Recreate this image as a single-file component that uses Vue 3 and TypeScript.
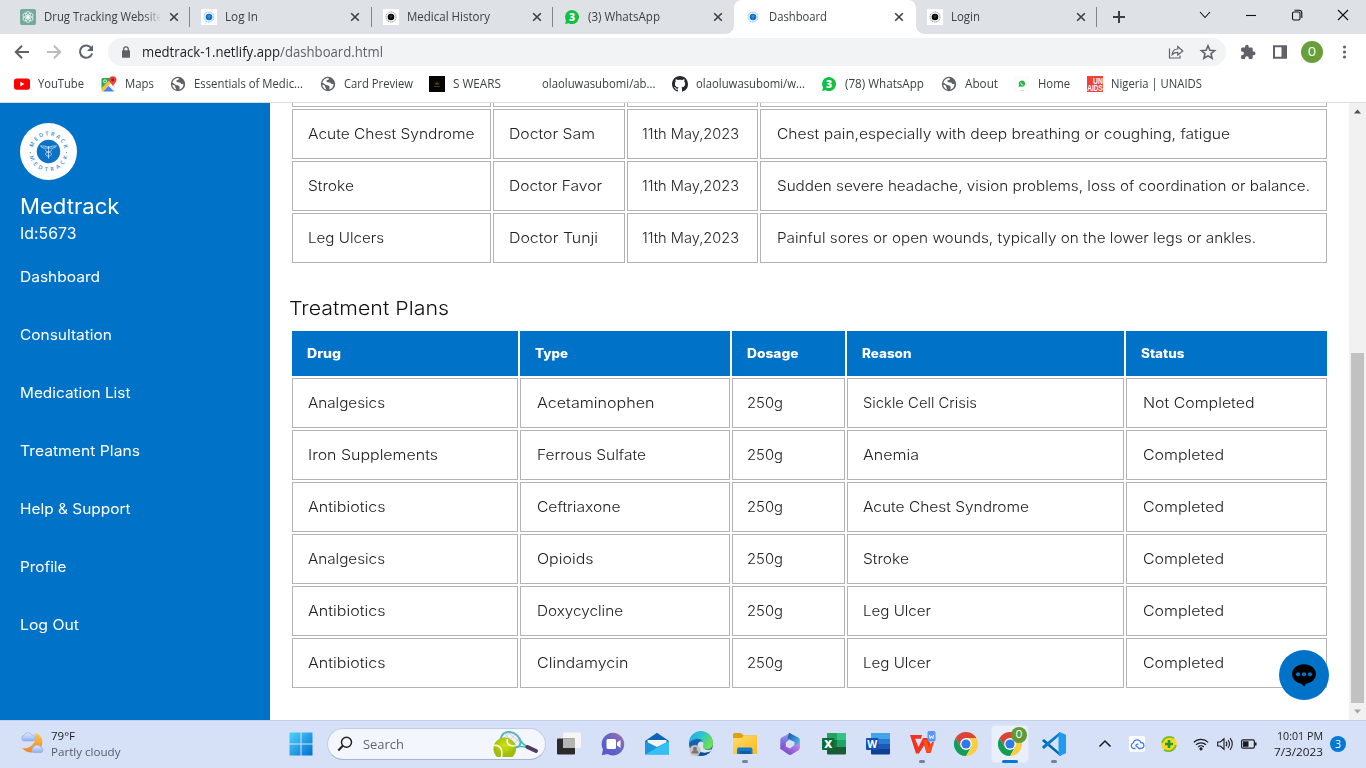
<script setup lang="ts">
import type { Directive } from 'vue'

interface Tab { title: string; w: number; icon: string; active?: boolean }
interface Bookmark { label: string; w: number; icon: string }
type Cell = [text: string, width: number]

// Stretches a single line of text horizontally to the given advance width.
const vFit: Directive<HTMLElement, number> = {
  mounted(el, { value }) {
    const natural = el.getBoundingClientRect().width
    if (!natural || !value) return
    el.style.transformOrigin = '0 50%'
    el.style.transform = `scaleX(${value / natural})`
    el.style.marginRight = `${value - natural}px`
  },
}

const tabs: Tab[] = [
  { title: 'Drug Tracking Website', w: 119, icon: 'gpt' },
  { title: 'Log In', w: 33, icon: 'medblue' },
  { title: 'Medical History', w: 83, icon: 'medblack' },
  { title: '(3) WhatsApp', w: 72, icon: 'wa' },
  { title: 'Dashboard', w: 58, icon: 'medblue', active: true },
  { title: 'Login', w: 29, icon: 'medblack' },
]

const bookmarks: Bookmark[] = [
  { label: 'YouTube', w: 46, icon: 'yt' },
  { label: 'Maps', w: 29, icon: 'maps' },
  { label: 'Essentials of Medic...', w: 109, icon: 'globe' },
  { label: 'Card Preview', w: 69, icon: 'globe' },
  { label: 'S WEARS', w: 48, icon: 'wears' },
  { label: 'olaoluwasubomi/ab...', w: 113.5, icon: 'blank' },
  { label: 'olaoluwasubomi/w...', w: 109, icon: 'github' },
  { label: '(78) WhatsApp', w: 79, icon: 'wa' },
  { label: 'About', w: 33, icon: 'globe' },
  { label: 'Home', w: 32, icon: 'walite' },
  { label: 'Nigeria | UNAIDS', w: 91, icon: 'unaids' },
]

const nav: Cell[] = [
  ['Dashboard', 80], ['Consultation', 92], ['Medication List', 110.5], ['Treatment Plans', 120],
  ['Help & Support', 110.5], ['Profile', 46.5], ['Log Out', 59],
]

const history: Cell[][] = [
  [['Acute Chest Syndrome', 166.5], ['Doctor Sam', 86], ['11th May,2023', 97], ['Chest pain,especially with deep breathing or coughing, fatigue', 453]],
  [['Stroke', 46], ['Doctor Favor', 93], ['11th May,2023', 97], ['Sudden severe headache, vision problems, loss of coordination or balance.', 533]],
  [['Leg Ulcers', 76], ['Doctor Tunji', 89], ['11th May,2023', 97], ['Painful sores or open wounds, typically on the lower legs or ankles.', 479]],
]

const planHeads: Cell[] = [['Drug', 34], ['Type', 33], ['Dosage', 51.5], ['Reason', 49.5], ['Status', 43.5]]
const dose: Cell = ['250g', 36]
const done: Cell = ['Completed', 81]
const plans: Cell[][] = [
  [['Analgesics', 77], ['Acetaminophen', 117.5], dose, ['Sickle Cell Crisis', 114], ['Not Completed', 111.5]],
  [['Iron Supplements', 130], ['Ferrous Sulfate', 109], dose, ['Anemia', 56], done],
  [['Antibiotics', 77.5], ['Ceftriaxone', 83.5], dose, ['Acute Chest Syndrome', 166], done],
  [['Analgesics', 77], ['Opioids', 56.5], dose, ['Stroke', 46], done],
  [['Antibiotics', 77.5], ['Doxycycline', 86], dose, ['Leg Ulcer', 68], done],
  [['Antibiotics', 77.5], ['Clindamycin', 91.5], dose, ['Leg Ulcer', 68], done],
]

const apps = ['view', 'chat', 'mail', 'edge', 'files', 'm365', 'excel', 'word', 'wps', 'chrome', 'chrome2', 'code']
const running = ['files', 'wps', 'code']
</script>

<template>
  <div class="screen">
    <svg class="defs" width="0" height="0">
      <defs>
        <symbol id="gpt" viewBox="0 0 16 16"><rect width="16" height="16" rx="2" fill="#74aa9c" /><g fill="none" stroke="#fff" stroke-width=".7"><ellipse cx="8" cy="5.4" rx="2.3" ry="2.9" /><ellipse cx="8" cy="5.4" rx="2.3" ry="2.9" transform="rotate(60 8 8)" /><ellipse cx="8" cy="5.4" rx="2.3" ry="2.9" transform="rotate(120 8 8)" /><ellipse cx="8" cy="5.4" rx="2.3" ry="2.9" transform="rotate(180 8 8)" /><ellipse cx="8" cy="5.4" rx="2.3" ry="2.9" transform="rotate(240 8 8)" /><ellipse cx="8" cy="5.4" rx="2.3" ry="2.9" transform="rotate(300 8 8)" /></g></symbol>
        <symbol id="medblue" viewBox="0 0 16 16"><rect width="16" height="16" fill="#fff" /><circle cx="8" cy="8" r="4.9" fill="none" stroke="#9cc6ea" stroke-width="1.1" stroke-dasharray="1.4 .5" /><circle cx="8" cy="8" r="3.3" fill="#0b6fc8" /><path d="M6.3 7h3.4M8 6.6v3" stroke="#7db7e8" stroke-width=".6" /></symbol>
        <symbol id="medblack" viewBox="0 0 16 16"><rect width="16" height="16" fill="#fff" /><circle cx="8" cy="8" r="5" fill="none" stroke="#a5a5a5" stroke-width="1.1" stroke-dasharray="1.4 .5" /><circle cx="8" cy="8" r="3.3" fill="#050505" /><path d="M6.3 7h3.4M8 6.6v3" stroke="#666" stroke-width=".6" /></symbol>
        <symbol id="wa" viewBox="0 0 16 16"><path d="M8 1a7 7 0 1 1-3.3 13.2L1.2 15 2 11.5A7 7 0 0 1 8 1z" fill="#0fc143" /><text x="8" y="11.8" text-anchor="middle" font-family="Open Sans" font-size="10.5" font-weight="800" fill="#fff">3</text></symbol>
        <symbol id="walite" viewBox="0 0 16 16"><rect width="16" height="16" fill="#fcfcfc" /><path d="M8 4.4a3.2 3.2 0 1 1-1.6 6l-1.8.5.5-1.7A3.2 3.2 0 0 1 8 4.4z" fill="#28b446" /><path d="M6.7 6.5c0 1.5 1 2.500 2.500 2.500" stroke="#fff" stroke-width=".9" fill="none" /><path d="M6 14.500h4" stroke="#ddd" stroke-width="1" /></symbol>
        <symbol id="yt" viewBox="0 0 16 16"><rect y="2.400" width="16" height="11.300" rx="2.600" fill="#f00" /><path d="M6.300 5.700v4.700L10.400 8z" fill="#fff" /></symbol>
        <symbol id="maps" viewBox="0 0 16 16"><rect x=".5" y="2" width="13.500" height="13.500" rx="1.500" fill="#e8eaed" /><path d="M.5 3.500A1.500 1.500 0 0 1 2 2h9L.5 12.500z" fill="#34a853" /><path d="M.5 12.500 8.500 4.500l2 2-9 9a1.500 1.500 0 0 1-1-1z" fill="#fbc02d" /><path d="M2 15.500 7.500 10l5.500 5.500z" fill="#4285f4" /><path d="m8.500 9 1-1 4.500 4.500v2z" fill="#fff" /><circle cx="4" cy="5.300" r="1.500" fill="none" stroke="#fff" stroke-width=".8" /><path d="M11.800.2a3.700 3.700 0 0 1 3.700 3.700c0 2.500-2.800 3.300-3.500 6.600-.8-3.300-3.900-4.100-3.900-6.600A3.700 3.700 0 0 1 11.800.2z" fill="#ea4335" /><circle cx="11.800" cy="3.900" r="1.300" fill="#8b1d14" /></symbol>
        <symbol id="globe" viewBox="0 0 16 16"><circle cx="8" cy="8" r="7.200" fill="#5f6368" /><path d="M8.500 2c1 1.300-.2 2.300-1.500 2.300S6.500 6 7.400 6.300c1.200.4 2.800-.3 3.200.8.400 1.200 1.600 1 2.900.8-.1 3-1.800 4.800-4 5.600-.4-1.200.6-2.300-.2-3.300C8.200 9 6 9.300 4.900 8.300 4 7.500 3 7.200 2.300 6.800 3 3.800 5.500 2 8.500 2z" fill="#fff" /><path d="M2.300 8.700c1.400.3 3 .5 3 2.200 0 1 .9 1.300.9 2.700-2.100-.6-3.700-2.500-3.900-4.900z" fill="#fff" /></symbol>
        <symbol id="wears" viewBox="0 0 16 16"><rect width="16" height="16" fill="#050505" /><path d="m5.500 6 1.200 1.300L8 5.300l1.300 2L10.500 6l-.5 2.800H6z" fill="#4a3812" /><path d="M5 10.500h6" stroke="#4a3812" /></symbol>
        <symbol id="blank" viewBox="0 0 16 16" />
        <symbol id="github" viewBox="0 0 16 16"><path fill="#24292f" d="M8 0C3.580 0 0 3.580 0 8c0 3.540 2.290 6.530 5.470 7.590.4.070.55-.17.55-.38 0-.19-.01-.82-.01-1.490-2.010.37-2.530-.49-2.690-.94-.09-.23-.48-.94-.82-1.130-.28-.15-.68-.52-.01-.53.63-.01 1.080.58 1.230.82.720 1.210 1.870.87 2.330.66.070-.52.28-.87.51-1.070-1.780-.2-3.640-.89-3.640-3.950 0-.87.31-1.590.82-2.150-.08-.2-.36-1.020.08-2.120 0 0 .67-.21 2.200.82.640-.18 1.320-.27 2-.27s1.360.09 2 .27c1.530-1.040 2.200-.82 2.200-.82.44 1.100.16 1.920.08 2.120.51.560.82 1.270.82 2.150 0 3.070-1.870 3.750-3.650 3.950.29.25.54.730.54 1.480 0 1.070-.01 1.930-.01 2.200 0 .21.15.46.55.38A8.010 8.010 0 0 0 16 8c0-4.420-3.580-8-8-8z" /></symbol>
        <symbol id="unaids" viewBox="0 0 16 16"><rect width="16" height="16" fill="#ef4136" /><text x="6" y="8.400" font-family="Liberation Sans" font-size="8.600" font-weight="700" fill="#fff" textLength="9.800" lengthAdjust="spacingAndGlyphs">UN</text><text x=".2" y="15.400" font-family="Liberation Sans" font-size="8.800" font-weight="700" fill="#fff" textLength="15.600" lengthAdjust="spacingAndGlyphs">AIDS</text></symbol>
        <linearGradient id="gWin" x1="0" y1="0" x2="1" y2="1"><stop offset="0" stop-color="#50d2fb" /><stop offset="1" stop-color="#0070d0" /></linearGradient>
        <linearGradient id="gChat" x1="0" y1="1" x2="1" y2="0"><stop offset="0" stop-color="#5457cb" /><stop offset=".5" stop-color="#6264c9" /><stop offset="1" stop-color="#a56fa6" /></linearGradient>
        <linearGradient id="gEdge" x1="0" y1="0" x2="1" y2=".5"><stop offset="0" stop-color="#2aa6e8" /><stop offset=".5" stop-color="#2bc4d0" /><stop offset="1" stop-color="#6ee04e" /></linearGradient>
        <linearGradient id="gFold" x1="0" y1="0" x2="1" y2="1"><stop offset="0" stop-color="#ffdc6a" /><stop offset="1" stop-color="#fcb91f" /></linearGradient>
        <linearGradient id="gM1" x1="0" y1="0" x2="0" y2="1"><stop offset="0" stop-color="#8ea0f5" /><stop offset="1" stop-color="#7b3fc4" /></linearGradient>
        <linearGradient id="gM2" x1="0" y1="0" x2="1" y2="1"><stop offset="0" stop-color="#194fae" /><stop offset="1" stop-color="#59cdf5" /></linearGradient>
        <linearGradient id="gM3" x1="0" y1="1" x2="1" y2="0"><stop offset="0" stop-color="#6a3cc0" /><stop offset="1" stop-color="#c88af0" /></linearGradient>
        <linearGradient id="gMoon" x1="0" y1="0" x2="0" y2="1"><stop offset="0" stop-color="#f9c846" /><stop offset="1" stop-color="#f0862d" /></linearGradient>
        <linearGradient id="gCloud" x1="0" y1="0" x2="0" y2="1"><stop offset="0" stop-color="#e3edff" /><stop offset="1" stop-color="#8fb0ee" /></linearGradient>
        <radialGradient id="gBall" cx=".5" cy=".4"><stop offset="0" stop-color="#d0e312" /><stop offset="1" stop-color="#9fbd0a" /></radialGradient>
        <symbol id="chrome" viewBox="0 0 24 24"><path d="M1.600 6 6.800 15 12 12V6h10.400A12 12 0 0 0 1.600 6z" fill="#db4437" /><path d="m12 24 5.200-9L12 12l-5.200 3L1.600 6A12 12 0 0 0 12 24z" fill="#0f9d58" /><path d="M12 24l5.200-9L12 12V6h10.400A12 12 0 0 1 12 24z" fill="#ffcd40" /><circle cx="12" cy="12" r="5.900" fill="#fff" /><circle cx="12" cy="12" r="4.600" fill="#2b7bee" /></symbol>
      </defs>
    </svg>

    <header class="tabstrip">
      <div v-for="(t, i) in tabs" :key="i" class="tab" :class="{ active: t.active, sep: !t.active && i !== 3 }">
        <svg class="ico"><use :href="'#' + t.icon" /></svg>
        <span class="title" :class="{ faded: i === 0 }"><span v-fit="t.w" class="seg">{{ t.title }}</span></span>
        <svg class="close" viewBox="0 0 10 10"><path d="m1.200 1.200 7.600 7.600M8.800 1.200 1.200 8.800" stroke="#3c4043" stroke-width="1.600" /></svg>
      </div>
      <svg class="plus" viewBox="0 0 12 12"><path d="M6 0v12M0 6h12" stroke="#3c4043" stroke-width="2" /></svg>
      <div class="winctl">
        <svg viewBox="0 0 12 12"><path d="m1 3 5 5.500L11 3" /></svg>
        <svg viewBox="0 0 12 12"><path d="M1 6.500h10" /></svg>
        <svg viewBox="0 0 12 12"><rect x="1.500" y="3" width="7.500" height="8" rx="1.500" /><path d="M3.500 1.300H8A2.800 2.800 0 0 1 10.800 4v5" /></svg>
        <svg viewBox="0 0 12 12"><path d="m1 1 10 10M11 1 1 11" /></svg>
      </div>
    </header>

    <div class="toolbar">
      <svg class="tb" viewBox="0 0 16 16"><path d="M15 8H2M8 1.800 1.800 8 8 14.200" fill="none" stroke="#5f6368" stroke-width="2" /></svg>
      <svg class="tb" viewBox="0 0 16 16"><path d="M1 8h13M8 1.800 14.200 8 8 14.200" fill="none" stroke="#babcbe" stroke-width="2" /></svg>
      <svg class="tb" viewBox="0 0 16 16"><path d="M13.400 4.200A6.200 6.200 0 1 0 14.100 9.500" fill="none" stroke="#5f6368" stroke-width="2" /><path d="M15 1v6H9z" fill="#5f6368" /></svg>
      <div class="omni">
        <svg class="lock" viewBox="0 0 10 12"><rect x="1" y="4.300" width="8" height="7.500" rx=".8" fill="#5f6368" /><path d="M2.700 5V3.200a2.300 2.300 0 0 1 4.600 0V5" fill="none" stroke="#5f6368" stroke-width="1.300" /></svg>
        <span v-fit="241" class="seg url"><b>medtrack-1.netlify.app</b>/dashboard.html</span>
        <svg class="share" viewBox="0 0 16 16"><path d="M1.500 4.500v9.500h10.500v-2.500" /><path d="M4.200 10.500c.3-3.500 2.600-5.500 5.600-5.500V2.500l5 4.500-5 4V8.300c-2.400 0-4.200.5-5.600 2.200z" /></svg>
        <svg class="share star" viewBox="0 0 16 16"><path d="m8 1.800 1.900 4.400 4.700.4-3.600 3.100 1.100 4.600L8 11.900l-4.100 2.400L5 9.700 1.400 6.600l4.700-.4z" /></svg>
      </div>
      <svg class="tb ext" viewBox="0 0 16 16"><path fill="#5f6368" d="M13.700 7.600h-1V4.900c0-.8-.6-1.400-1.400-1.400H8.700v-.9a1.800 1.800 0 0 0-3.600 0v.9H2.500c-.8 0-1.400.6-1.400 1.400v2.500H2a1.900 1.900 0 0 1 0 3.800h-.9v2.500c0 .8.600 1.400 1.400 1.400H5v-.9a1.900 1.900 0 0 1 3.800 0v.9h2.500c.8 0 1.400-.6 1.400-1.400v-2.500h1a1.800 1.800 0 0 0 0-3.600z" /></svg>
      <svg class="tb" viewBox="0 0 16 16"><path d="M2 2.200h12v11.600H2z" fill="none" stroke="#5f6368" stroke-width="2" /><path d="M9.500 2h5v12h-5z" fill="#5f6368" /></svg>
      <span class="avatar">O</span>
      <svg class="tb" viewBox="0 0 16 16" fill="#5f6368"><circle cx="8.500" cy="3" r="1.600" /><circle cx="8.500" cy="8" r="1.600" /><circle cx="8.500" cy="13" r="1.600" /></svg>
    </div>

    <nav class="bookmarks">
      <div v-for="(b, i) in bookmarks" :key="i" class="bm">
        <svg class="ico"><use :href="'#' + b.icon" /></svg>
        <span v-fit="b.w" class="seg">{{ b.label }}</span>
      </div>
    </nav>

    <div class="page">
      <aside class="side">
        <svg class="logo" viewBox="0 0 57 57">
          <circle cx="28.500" cy="28.500" r="28.500" fill="#fff" />
          <path id="arcTop" d="M12.500 28.500a16 16 0 0 1 32 0" fill="none" />
          <path id="arcBot" d="M8.700 28.500a19.800 19.800 0 0 0 39.600 0" fill="none" />
          <g font-family="Open Sans" font-size="5.600" font-weight="600" fill="#3b8dd0">
            <text><textPath href="#arcTop" startOffset="4" textLength="43">MEDTRACK</textPath></text>
            <text><textPath href="#arcBot" startOffset="5" textLength="52">MEDTRACK</textPath></text>
          </g>
          <circle cx="10.300" cy="29.500" r=".6" fill="#3b8dd0" /><circle cx="46.500" cy="29.500" r=".6" fill="#3b8dd0" />
          <circle cx="28.500" cy="28.500" r="11.700" fill="#0b72c6" />
          <path d="M28.500 23v12.500M20.500 23c3 0 5.500 0 8 1.500 2.500-1.500 5-1.500 8-1.500-1.500 2.500-5 2.500-8 1.800-3 .7-6.500.7-8-1.800zM25.200 26.500c0 3 6.300 2.300 6.300 4.600s-5 1.500-3 3.400M31.800 26.500c0 3-6.300 2.300-6.300 4.600s5 1.500 3 3.400" fill="none" stroke="#cfe5f7" stroke-width=".8" />
        </svg>
        <div class="brand"><span v-fit="99.5" class="seg">Medtrack</span></div>
        <div class="uid"><span v-fit="56.5" class="seg">Id:5673</span></div>
        <ul class="menu">
          <li v-for="n in nav" :key="n[0]"><span v-fit="n[1]" class="seg">{{ n[0] }}</span></li>
        </ul>
      </aside>

      <main class="main">
        <div class="grid hist">
          <div v-for="k in 4" :key="k" class="cell stub"></div>
          <template v-for="(r, i) in history" :key="i">
            <div v-for="(c, j) in r" :key="j" class="cell" :class="{ tight: j === 2, loose: j === 3 }"><span v-fit="c[1]" class="seg">{{ c[0] }}</span></div>
          </template>
        </div>
        <h2><span v-fit="160" class="seg">Treatment Plans</span></h2>
        <div class="grid plan">
          <div v-for="h in planHeads" :key="h[0]" class="head"><span v-fit="h[1]" class="seg">{{ h[0] }}</span></div>
          <template v-for="(r, i) in plans" :key="i">
            <div v-for="(c, j) in r" :key="j" class="cell" :class="{ tight: j === 2, loose: j === 1 || j === 4 }"><span v-fit="c[1]" class="seg">{{ c[0] }}</span></div>
          </template>
        </div>
        <div class="fab">
          <svg width="26" height="26" viewBox="0 0 26 26"><path d="M13 2.200c6.700 0 12 4.300 12 9.800 0 5-4.400 9-10.200 9.700L13.500 24.500l-3.800-3C4.700 20.500 1 16.700 1 12c0-5.500 5.300-9.800 12-9.800z" /><g fill="#0073c8"><circle cx="7" cy="12.300" r="2.100" /><circle cx="13" cy="12.300" r="2.100" /><circle cx="19" cy="12.300" r="2.100" /></g></svg>
        </div>
      </main>

      <div class="scroll">
        <svg viewBox="0 0 17 17"><path d="M5 10.500h7L8.500 6.500z" fill="#505050" /></svg>
        <div class="thumb"></div>
        <svg viewBox="0 0 17 17"><path d="M5 6.500h7l-3.500 4z" fill="#a3a3a3" /></svg>
      </div>
    </div>

    <footer class="taskbar">
      <div class="weather">
        <svg width="26" height="26" viewBox="0 0 26 26"><path d="M15 2c6 1.500 8.500 7 7 12-2 7-13 11-20 3 8 1 15-4 13-15z" fill="url(#gMoon)" /><path d="M4 10a3 3 0 0 1 .3-5.900A4.200 4.200 0 0 1 11.800 4 3 3 0 0 1 12.500 10z" fill="url(#gCloud)" stroke="#89a4e0" stroke-width=".6" /><path d="M13 21.500a3 3 0 0 1 .3-5.200 4 4 0 0 1 7.200-.3 3 3 0 0 1 1 5.500z" fill="url(#gCloud)" stroke="#89a4e0" stroke-width=".6" /></svg>
        <div class="wtext"><div><span v-fit="24" class="seg">79°F</span></div><div class="dim"><span v-fit="69.5" class="seg">Partly cloudy</span></div></div>
      </div>
      <svg class="win" width="24" height="24" viewBox="0 0 24 24"><path d="M.5.5h11v11H.5zM12.500.5h11v11h-11zM.5 12.500h11v11H.5zM12.500 12.500h11v11h-11z" fill="url(#gWin)" /></svg>
      <div class="search">
        <svg width="16" height="16" viewBox="0 0 16 16"><circle cx="9.500" cy="6.300" r="5" fill="none" stroke="#222" stroke-width="1.500" /><path d="M5.800 9.800 1.300 14.500" stroke="#222" stroke-width="2" /></svg>
        <span v-fit="41" class="seg">Search</span>
        <svg class="tennis" width="46" height="28" viewBox="0 0 46 28"><path d="M7.500 9C9 3 12 1.500 17 2c6 .7 10 5.500 10.500 10 .2 4-3 6-7 5.500" fill="#eef2fb" stroke="#4fb9bd" stroke-width="2" /><path d="m11 3 12 12M15 2.500l11 9M9 6l10 11M22 4l-8 10M17 3l-7 6M26 8l-7 9" stroke="#c8b9d8" stroke-width=".6" /><path d="M26 8c2 4 4 7 9 9M21 17.500c5-1.500 9-1.500 14 .5" fill="none" stroke="#4fb9bd" stroke-width="1.700" /><path d="m34.500 17 8.500 4" stroke="#513a5e" stroke-width="4" stroke-linecap="round" /><path d="M4 27A11.300 11.300 0 1 1 19.500 27z" fill="url(#gBall)" /><path d="M1 15.500c6-1 9 4 7.500 11.500M14.500 9c-1.500 5 2 8 8 6.500" fill="none" stroke="#f5fae2" stroke-width="1.700" /></svg>
      </div>
      <div class="apps">
        <div v-for="a in apps" :key="a" class="app" :class="{ on: a === 'chrome2' }">
          <svg v-if="a === 'view'" viewBox="0 0 24 24"><rect x="6" y=".5" width="18" height="15.500" rx="1" fill="#f6f6f6" /><rect y="6.500" width="18" height="16" rx="1" fill="#2b2b2b" /><rect x="6" y="6.500" width="12" height="9.500" fill="#b5b5b5" /></svg>
          <svg v-else-if="a === 'chat'" viewBox="0 0 24 24"><path d="M12 .8A11.300 11.300 0 1 1 6.500 22L.8 23.200 2 17.500A11.300 11.300 0 0 1 12 .8z" fill="url(#gChat)" /><rect x="5.500" y="7" width="9.500" height="10" rx="1.500" fill="#fff" /><path d="m16 10.500 3.500-2.500v8L16 13.500z" fill="#fff" /></svg>
          <svg v-else-if="a === 'mail'" viewBox="0 0 24 24"><path d="M0 9 12 .7 24 9v5H0z" fill="#1062b5" /><path d="M2.500 8h19v4L12 16l-9.500-4z" fill="#f4f4f4" /><path d="M0 9v13.500h24V9L12 15z" fill="#1a94dc" /><path d="M0 22.500 24 9v13.500z" fill="#35bff2" /></svg>
          <svg v-else-if="a === 'edge'" viewBox="0 0 24 24"><circle cx="12" cy="12" r="12" fill="#1464b4" /><path d="M0 11A12 12 0 0 1 24 11c0 5-3.500 6.500-7 6.500-4 0-3-2.500-2.500-4C15 9 11 6 7 7c-4 .8-6.500 3-7 4z" fill="url(#gEdge)" /><path d="M8.500 15c0-4 1.500-5.500 4-5.500 2.500.5 2.500 3 1.800 4.500-1 3.500 3.700 5 8 3.200l.3 1.500C19 21.500 8.500 22 8.500 15z" fill="#d8e3f8" /><path d="M8 15c0 6 7 8 14 4-6 8-17 4-17 0z" fill="#0b4d92" /><circle cx="6" cy="18.500" r="5.500" fill="#c9c4be" /><circle cx="6" cy="16.700" r="2" fill="#777" /><path d="M2.500 21.500a3.500 3.500 0 0 1 7 0z" fill="#777" /></svg>
          <svg v-else-if="a === 'files'" viewBox="0 0 24 24"><path d="M0 2.500A1.500 1.500 0 0 1 1.500 1H8l2.500 2.500H23a1 1 0 0 1 1 1V10H0z" fill="#e0a010" /><path d="M0 6h8.500l2.500-2.500h13V22H0z" fill="url(#gFold)" /><path d="M4 22v-4.500a2 2 0 0 1 2-2h11.500a2 2 0 0 1 2 2V22z" fill="#1478cc" /><path d="M6.500 19h11v3h-11z" fill="#0d5ba6" /></svg>
          <svg v-else-if="a === 'm365'" viewBox="0 0 24 24"><path d="M12.500.8 4 5.300A3 3 0 0 0 2.300 8v9l5.500 2V10.500L12 7z" fill="url(#gM1)" /><path d="m11 .8 9.200 4.800A3 3 0 0 1 21.800 8.300v8l-5.300-3v-3.300L9.500 6.500z" fill="url(#gM2)" /><path d="M2.300 16.800 10.500 22.500a3 3 0 0 0 3 0l7-4.300a3 3 0 0 0 1.300-2.700v-3.500l-5.300 1L12 16.500l-4.200-2z" fill="url(#gM3)" /></svg>
          <svg v-else-if="a === 'excel'" viewBox="0 0 24 24"><rect x="5" y="1" width="19" height="21.500" rx="1" fill="#185c37" /><path d="M5 1h10v7H5z" fill="#21a366" /><path d="M15 1h9v7h-9z" fill="#33c481" /><path d="M15 8h9v7h-9z" fill="#21a366" /><path d="M5 8h10v7H5z" fill="#107c41" /><rect y="6" width="12.500" height="12" rx="1" fill="#0c6a36" /><text x="6.200" y="15.900" text-anchor="middle" font-family="Open Sans" font-size="11" font-weight="800" fill="#fff">X</text></svg>
          <svg v-else-if="a === 'word'" viewBox="0 0 24 24"><rect x="5" y="1" width="19" height="21.500" rx="1" fill="#103f91" /><path d="M5 1h19v6H5z" fill="#41a5ee" /><path d="M5 7h19v5.500H5z" fill="#2b7cd3" /><path d="M5 12.500h19V17H5z" fill="#185abd" /><rect y="6" width="12.500" height="12" rx="1" fill="#174fae" /><text x="1.200" y="15.900" font-family="Open Sans" font-size="11" font-weight="700" fill="#fff" textLength="10" lengthAdjust="spacingAndGlyphs">W</text></svg>
          <svg v-else-if="a === 'wps'" viewBox="0 0 24 24"><path d="M0 3h12l-1 3.800H5L8.500 15 13 6h4.500L21 13l1-3h2l-3.500 11h-4l-2.300-8L9 21.500H6z" fill="#f5301f" /><path d="m13 8 3.500 12.500h3.200L23 11h-2l-2 5-2.500-8z" fill="#ff5018" /><rect x="17.500" y="-1" width="8" height="10.500" rx="1.500" fill="#5b97f7" /><path d="m19.500 3 .7 3.500 1.300-2.300 1.300 2.300.7-3.500" fill="none" stroke="#fff" /></svg>
          <svg v-else-if="a === 'code'" viewBox="0 0 24 24"><path d="M0 8.800 2 7l15.500 13.500L24 19l-6 5L1 9.700z" fill="#0065a9" /><path d="M0 15.200 2 17 17.500 3.500 18 0 .3 14.300z" fill="#007acc" /><path d="M17.500 0 24 2.800v18.400L17.500 24l-1-1.500V1.500z" fill="#1f9cf0" /></svg>
          <svg v-else viewBox="0 0 24 24"><use href="#chrome" /></svg>
          <i v-if="a === 'chrome2'" class="cbadge">O</i>
          <i v-if="running.includes(a) || a === 'chrome2'" class="dot" :class="{ long: a === 'chrome2' }"></i>
        </div>
      </div>
      <div class="tray">
        <svg viewBox="0 0 16 16"><path d="m2.500 10.500 5.500-5.500 5.500 5.500" fill="none" stroke="#1b1b1b" stroke-width="1.500" /></svg>
        <svg viewBox="0 0 16 16"><rect width="16" height="16" rx="2" fill="#fff" /><path d="M6.500 12.500h-2a3 3 0 0 1-.3-5.700 4 4 0 0 1 7.600-.3 3 3 0 0 1 .2 6h-2L6.800 9.500a1.600 1.600 0 0 1 2.600-1" fill="none" stroke="#3f7ef0" stroke-width="1.300" /></svg>
        <svg viewBox="0 0 16 16"><circle cx="8" cy="8" r="7.800" fill="#fdd81c" /><path d="M1.200 7A7.500 7.500 0 0 1 13 2.300M14.800 9A7.500 7.500 0 0 1 3 13.700" fill="none" stroke="#6cbf35" stroke-width="1.800" /><path d="M8 4v8M4 8h8" stroke="#159a3c" stroke-width="2.600" /></svg>
        <svg viewBox="0 0 16 16" fill="none" stroke="#1b1b1b" stroke-width="1.200"><path d="M.8 6.400a10.300 10.300 0 0 1 14.400 0M3 8.800a7.200 7.200 0 0 1 10 0M5.200 11a4 4 0 0 1 5.600 0" /><circle cx="8" cy="12.800" r="1" fill="#1b1b1b" /></svg>
        <svg class="near" viewBox="0 0 16 16" fill="none" stroke="#1b1b1b" stroke-width="1.100"><path d="M.7 6v4h2.600L7 13.200V2.800L3.300 6zM9 5.700c1 1.300 1 3.300 0 4.600M11 4c2 2.200 2 5.800 0 8M13 2.200c3 3.200 3 8.400 0 11.600" /></svg>
        <svg class="near" viewBox="0 0 16 16"><rect x=".6" y="3.800" width="12.800" height="8.400" rx="1.500" fill="none" stroke="#1b1b1b" stroke-width="1.200" /><rect x="2" y="5.300" width="5.500" height="5.500" fill="#1b1b1b" /><path d="M14.800 6.500v3" stroke="#1b1b1b" stroke-width="1.500" /></svg>
        <div class="clock"><div><span v-fit="46" class="seg">10:01 PM</span></div><div><span v-fit="49" class="seg">7/3/2023</span></div></div>
        <span class="note">3</span>
      </div>
    </footer>
  </div>
</template>

<style>
body { margin: 0; overflow: hidden; }
</style>

<style scoped>
.screen { width: 1366px; height: 768px; display: flex; flex-direction: column; overflow: hidden; background: #fff; font-family: "Open Sans", "Noto Sans", sans-serif; font-size: 12px; color: #3c4043; }
.screen * { box-sizing: border-box; }
.defs { position: absolute; }
svg { display: block; flex: none; overflow: visible; }
.seg { display: inline-block; white-space: pre; flex: none; }
.ico { width: 16px; height: 16px; }

.tabstrip { height: 34px; background: #dee1e6; display: flex; align-items: center; padding-left: 9px; flex: none; }
.tab { width: 181.350px; height: 34px; flex: none; display: flex; align-items: center; padding: 0 11.500px 0 11px; position: relative; }
.tab.sep::after { content: ""; position: absolute; right: 0; top: 7px; width: 1px; height: 20px; background: #80868b; }
.tab.active { background: #fff; border-radius: 8px 8px 0 0; }
.tab.active::before, .tab.active::after { content: ""; position: absolute; bottom: 0; width: 8px; height: 8px; }
.tab.active::before { left: -8px; background: radial-gradient(circle at 0 0, transparent 7.500px, #fff 8px); }
.tab.active::after { right: -8px; background: radial-gradient(circle at 100% 0, transparent 7.500px, #fff 8px); }
.title { flex: 1; margin-left: 8px; overflow: hidden; white-space: nowrap; padding-bottom: 1px; }
.title.faded { margin-right: 8px; -webkit-mask-image: linear-gradient(90deg, #000 85%, transparent); mask-image: linear-gradient(90deg, #000 85%, transparent); }
.close { width: 10px; height: 10px; }
.plus { width: 12px; height: 12px; margin-left: 16px; }
.winctl { margin-left: auto; display: flex; gap: 34px; padding-right: 17px; margin-bottom: 5px; }
.winctl svg { width: 12px; height: 12px; fill: none; stroke: #111; stroke-width: 1.100; }

.toolbar { height: 36px; display: flex; align-items: center; gap: 16px; padding: 0 14px; flex: none; }
.tb { width: 16px; height: 16px; }
.omni { flex: 1; height: 28px; border-radius: 14px; background: #f1f3f4; display: flex; align-items: center; padding: 0 10px 0 13px; margin: 0 -2px 0 -2px; }
.lock { width: 10px; height: 12px; margin-right: 11px; }
.url { font-size: 14px; color: #5f6368; padding-bottom: 1px; }
.url b { font-weight: 400; color: #202124; }
.share { width: 16px; height: 16px; fill: none; stroke: #5f6368; stroke-width: 1.200; margin-left: auto; }
.star { margin-left: 16px; stroke-width: 1.600; }
.avatar { width: 22px; height: 22px; margin: 0 -3px; border-radius: 50%; background: #689f38; color: #fff; font: 12px/22px Roboto, sans-serif; text-align: center; }

.bookmarks { height: 33px; display: flex; gap: 16.500px; padding: 0 0 5px 14px; border-bottom: 1px solid #dadce0; flex: none; }
.bm { display: flex; gap: 8px; align-items: center; }

.page { height: 617px; display: flex; flex: none; font-family: Inter, sans-serif; }
.side { width: 270px; background: #0073c8; color: #fff; padding: 20px 20px 0; flex: none; }
.logo { width: 57px; height: 57px; }
.brand { font-size: 21px; line-height: 28px; margin-top: 13px; }
.uid { font-size: 15.500px; line-height: 24px; margin-top: 1px; }
.menu { list-style: none; margin: 1px 0 0; padding: 0; font-size: 14.300px; }
.menu li { height: 58px; display: flex; align-items: center; }

.main { flex: 1; position: relative; padding-left: 22px; overflow: hidden; color: #222; font-size: 14.300px; font-weight: 300; }
.grid { display: grid; gap: 2px; width: 1035px; }
.hist { grid-template-columns: 199px 132px 131px 567px; grid-template-rows: 4px repeat(3, 50px); }
.plan { grid-template-columns: 226px 210px 113px 277px 201px; grid-template-rows: 45px repeat(6, 50px); }
.cell { border: 1px solid #b3b3b3; padding: 0 15px 2px; display: flex; align-items: center; }
.cell.tight { padding-left: 14px; }
.cell.loose { padding-left: 15.500px; }
.stub { border-top: 0; padding: 0; }
.head { background: #0073c8; color: #fff; font-weight: 800; font-size: 12.600px; padding: 0 15px 1px; display: flex; align-items: center; }
h2 { margin: 31px 0 8px -3px; font-size: 19.200px; line-height: 29px; font-weight: 300; color: #111; }
.fab { position: absolute; left: 1009px; top: 547px; width: 50px; height: 50px; border-radius: 50%; background: #0073c8; display: grid; place-items: center; }

.scroll { width: 17px; background: #f1f1f1; flex: none; display: flex; flex-direction: column; }
.scroll svg { width: 17px; height: 17px; }
.thumb { width: 13px; height: 350px; margin: 233px 0 0 2px; background: #c1c1c1; }

.taskbar { height: 48px; background: #d6e1f8; border-top: 1px solid #c4d0e8; padding-bottom: 1px; display: flex; align-items: center; position: relative; flex: none; color: #1b1b1b; font-size: 11.500px; }
.weather { display: flex; gap: 5px; width: 289px; padding-left: 20px; align-items: center; }
.wtext { line-height: 16px; }
.dim { color: #555b68; }
.search { width: 219px; height: 32px; margin-left: 14px; border-radius: 16px; background: #f3f6fd; border: 1px solid #c1cce2; border-bottom-color: #a9b5cf; display: flex; align-items: center; padding-left: 9px; font-size: 13px; color: #60646c; gap: 10px; }
.tennis { margin-left: auto; margin-right: 6px; }
.apps { display: flex; margin-left: 1px; }
.app { width: 44.100px; height: 46px; display: grid; place-items: center; position: relative; }
.app > svg { width: 24px; height: 24px; z-index: 1; }
.app.on::before { content: ""; position: absolute; inset: 4px 3px; background: #e9effb; border: 1px solid #dfe7f6; border-radius: 4px; }
.dot { position: absolute; left: 19px; bottom: 4px; width: 6px; height: 3px; border-radius: 2px; background: #7b8190; z-index: 2; }
.dot.long { left: 14px; width: 16px; background: #0078d4; }
.cbadge { position: absolute; left: 23px; top: 6px; width: 16px; height: 16px; border-radius: 50%; background: #5f9a35; color: #fff; font: 10px/16px Roboto, sans-serif; text-align: center; z-index: 3; }
.tray { margin-left: auto; display: flex; align-items: center; gap: 16px; padding-right: 20px; }
.tray svg { width: 16px; height: 16px; }
.tray .near { margin-left: -8px; }
.clock { width: 50px; text-align: right; line-height: 16px; }
.note { width: 16px; height: 16px; border-radius: 50%; background: #0078d4; color: #fff; font-size: 10.500px; line-height: 16px; text-align: center; margin-left: -9px; }
</style>
